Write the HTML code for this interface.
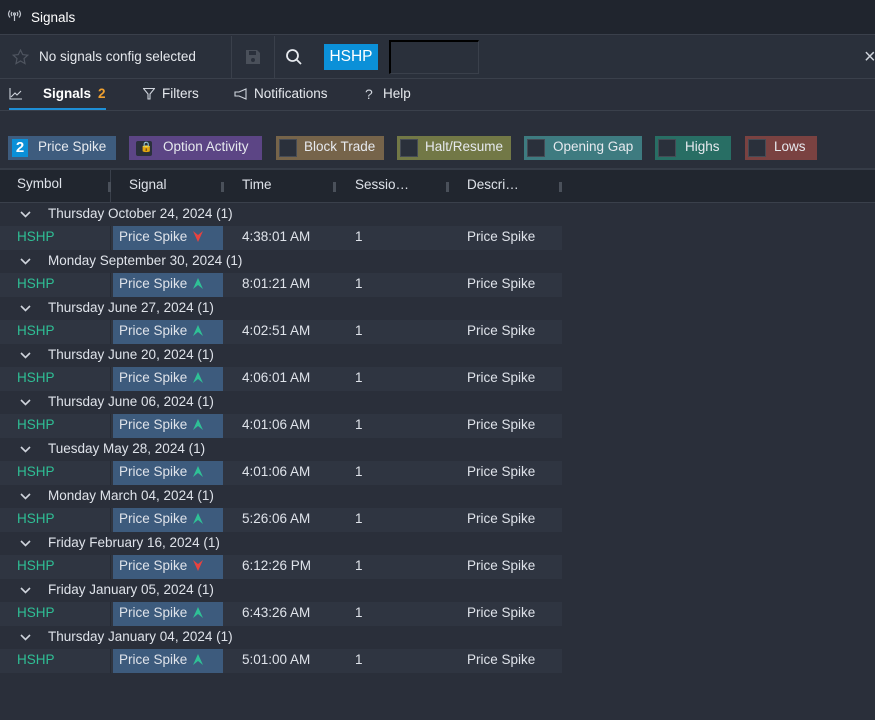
<!DOCTYPE html>
<html><head><meta charset="utf-8"><style>
*{box-sizing:border-box;margin:0;padding:0}
body{width:875px;height:720px;background:#2a2f3a;font-family:"Liberation Sans",sans-serif;font-size:13.5px;color:#dfe3ea;position:relative;overflow:hidden}
.abs{position:absolute}
.top{left:0;top:0;width:875px;height:35px;background:#20252e;border-bottom:1px solid #3a404b}
.tb{left:0;top:36px;width:875px;height:43px;background:#2a303b;border-bottom:1px solid #3a404b}
.tabs{left:0;top:79px;width:875px;height:32px;border-bottom:1px solid #3a404b}
.chip{position:absolute;top:136px;height:24px;line-height:21px;font-size:13.5px;color:#e6e9ee}
.box{position:absolute;left:3px;top:3px;width:18px;height:18px;background:#2a303b;border:1px solid #454b55}
.hdr{left:0;top:168px;width:875px;height:35px;background:#21262f;border-top:2px solid #363c47;border-bottom:1px solid #3a404b}
.sep{position:absolute;top:12px;width:3px;height:10px;background:#4a505a}
.grp{position:absolute;left:0;height:23px;line-height:22px;width:875px}
.row{position:absolute;left:0;width:562px;height:24px;line-height:22px;background:#2f3541}
.sig{position:absolute;left:113px;top:0;width:110px;height:24px;background:#3d5b7d;padding-left:6px}
</style></head><body>
<div class="abs top">
<svg class="abs" style="left:7px;top:9px" width="15" height="13" viewBox="0 0 15 13" fill="none" stroke="#bfc4cc" stroke-width="1.2"><path d="M3 1.5Q0 5 3 8.5M12 1.5Q15 5 12 8.5M5 3Q3.5 5 5 7M10 3Q11.5 5 10 7"/><circle cx="7.5" cy="5" r="1"/><path d="M7.5 6V12"/></svg>
<div class="abs" style="left:31px;top:10px;font-size:13.5px;color:#fff">Signals</div>
</div>
<div class="abs tb">
<svg class="abs" style="left:12px;top:13px" width="17" height="16" viewBox="0 0 17 16"><path d="M8.5 1l2.2 4.6 5 .6-3.7 3.4 1 5-4.5-2.6-4.5 2.6 1-5L1.3 6.2l5-.6z" fill="none" stroke="#4f5560" stroke-width="1.2"/></svg>
<div class="abs" style="left:39px;top:13px;color:#e6e9ee">No signals config selected</div>
<div class="abs" style="left:231px;top:0;width:1px;height:43px;background:#3a404b"></div>
<svg class="abs" style="left:245px;top:13px" width="16" height="16" viewBox="0 0 16 16"><path d="M1 1h11l3 3v11H1z" fill="#4a505a"/><rect x="4" y="2" width="7" height="4" fill="#2a303b"/><circle cx="8" cy="11" r="2" fill="#2a303b"/></svg>
<div class="abs" style="left:274px;top:0;width:1px;height:43px;background:#3a404b"></div>
<svg class="abs" style="left:285px;top:12px" width="18" height="18" viewBox="0 0 18 18" fill="none" stroke="#e6e9ee" stroke-width="1.8"><circle cx="7.5" cy="7.5" r="5.5"/><path d="M11.5 11.5L16 16"/></svg>
<div class="abs" style="left:324px;top:8px;width:54px;height:26px;background:#0b90d8;color:#fff;font-size:15.5px;line-height:26px;text-align:center">HSHP</div>
<div class="abs" style="left:389px;top:4px;width:90px;height:34px;border:2px solid #000;border-right-color:#3a404b;border-bottom-color:#3a404b;border-right-width:1px;border-bottom-width:1px"></div>
<div class="abs" style="left:864px;top:10px;color:#cfd4dc;font-size:20px">×</div>
</div>
<div class="abs tabs">
<svg class="abs" style="left:9px;top:9px" width="14" height="12" viewBox="0 0 14 12" fill="none" stroke="#cfd4dc" stroke-width="1.1"><path d="M1 0V11H13M2 9L6 5L8 7L12 3"/></svg>
<div class="abs" style="left:43px;top:7px;color:#fff;font-weight:bold">Signals</div>
<div class="abs" style="left:98px;top:7px;color:#f0a030;font-weight:bold">2</div>
<div class="abs" style="left:9px;top:29px;width:97px;height:2px;background:#1e8fd6"></div>
<svg class="abs" style="left:143px;top:9px" width="12" height="12" viewBox="0 0 12 12" fill="none" stroke="#cfd4dc" stroke-width="1.1"><path d="M0.5 0.5H11.5L7 6V11H5V6z"/></svg>
<div class="abs" style="left:162px;top:7px;color:#e6e9ee">Filters</div>
<svg class="abs" style="left:234px;top:9px" width="13" height="12" viewBox="0 0 13 12" fill="none" stroke="#cfd4dc" stroke-width="1.1"><path d="M12 1V11L5 8H1V4H5z"/></svg>
<div class="abs" style="left:254px;top:7px;color:#e6e9ee">Notifications</div>
<div class="abs" style="left:365px;top:7px;color:#cfd4dc;font-size:14px">?</div>
<div class="abs" style="left:383px;top:7px;color:#e6e9ee">Help</div>
</div>
<div class="chip" style="left:8px;width:108px;background:#3e5c7e"><span class="abs" style="left:4px;top:3px;width:16px;height:18px;background:#0b90d8;color:#fff;font-weight:bold;font-size:15px;line-height:18px;text-align:center">2</span><span class="abs" style="left:30px">Price Spike</span></div>
<div class="chip" style="left:129px;width:133px;background:#5c4585"><span class="abs" style="left:7px;top:5px;width:16px;height:15px;background:#2a303b;border-radius:2px"></span><span class="abs" style="left:11px;top:5px;color:#e9a925;font-size:10px;line-height:14px">🔒</span><span class="abs" style="left:34px">Option Activity</span></div>
<div class="chip" style="left:276px;width:108px;background:#76644a"><span class="box"></span><span class="abs" style="left:28px">Block Trade</span></div>
<div class="chip" style="left:397px;width:114px;background:#727846"><span class="box"></span><span class="abs" style="left:28px">Halt/Resume</span></div>
<div class="chip" style="left:524px;width:118px;background:#3e7b80"><span class="box"></span><span class="abs" style="left:29px">Opening Gap</span></div>
<div class="chip" style="left:655px;width:76px;background:#286e64"><span class="box"></span><span class="abs" style="left:30px">Highs</span></div>
<div class="chip" style="left:745px;width:72px;background:#7a4241"><span class="box"></span><span class="abs" style="left:29px">Lows</span></div>
<div class="abs hdr">
<div class="abs" style="left:17px;top:6px">Symbol</div><div class="abs" style="left:110px;top:0;width:1px;height:33px;background:#3a404b"></div><div class="sep" style="left:108px"></div>
<div class="abs" style="left:129px;top:7px">Signal</div><div class="sep" style="left:221px"></div>
<div class="abs" style="left:242px;top:7px">Time</div><div class="sep" style="left:333px"></div>
<div class="abs" style="left:355px;top:7px">Sessio…</div><div class="sep" style="left:446px"></div>
<div class="abs" style="left:467px;top:7px">Descri…</div><div class="sep" style="left:559px"></div>
</div>
<div id="rows"></div>
<script>
var d=[["Thursday October 24, 2024","4:38:01 AM",0],["Monday September 30, 2024","8:01:21 AM",1],["Thursday June 27, 2024","4:02:51 AM",1],["Thursday June 20, 2024","4:06:01 AM",1],["Thursday June 06, 2024","4:01:06 AM",1],["Tuesday May 28, 2024","4:01:06 AM",1],["Monday March 04, 2024","5:26:06 AM",1],["Friday February 16, 2024","6:12:26 PM",0],["Friday January 05, 2024","6:43:26 AM",1],["Thursday January 04, 2024","5:01:00 AM",1]];
var h="";d.forEach(function(r,i){var y=203+i*47;
h+='<div class="grp" style="top:'+y+'px"><svg class="abs" style="left:20px;top:8px" width="11" height="7" viewBox="0 0 11 7" fill="none" stroke="#cfd4dc" stroke-width="1.6"><path d="M1 1l4.5 4.5L10 1"/></svg><span class="abs" style="left:48px">'+r[0]+' (1)</span></div>';
h+='<div class="row" style="top:'+(y+23)+'px"><span class="abs" style="left:17px;color:#2fbf95">HSHP</span><div class="abs" style="left:110px;top:0;width:1px;height:24px;background:#262b34"></div><div class="sig">Price Spike <svg style="vertical-align:-1px;margin-left:2px" width="10" height="11" viewBox="0 0 10 11">'+(r[2]?'<path d="M5 0L10 11L5 7L0 11z" fill="#2fc096"/>':'<path d="M5 11L10 0L5 4L0 0z" fill="#e8423f"/>')+'</svg></div><span class="abs" style="left:242px">'+r[1]+'</span><span class="abs" style="left:355px">1</span><span class="abs" style="left:467px">Price Spike</span></div>';});
document.getElementById("rows").innerHTML=h;
</script>
</body></html>
